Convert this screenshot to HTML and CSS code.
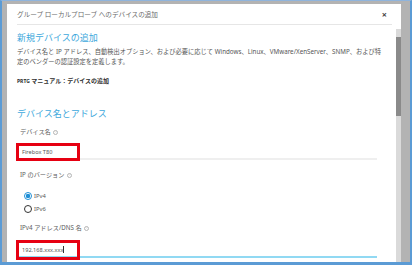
FILE: index.html
```html
<!DOCTYPE html>
<html lang="ja">
<head>
  <meta charset="UTF-8">
  <title>デバイスの追加</title>
  <link rel="stylesheet" href="styles.css">
</head>
<body>
  <div class="dialog">
    <div class="dialog-header">
      <span class="dialog-title">グループ ローカルプローブ へのデバイスの追加</span>
      <span class="close">×</span>
    </div>
    <div class="dialog-body">
      <div class="content">
        <h2>新規デバイスの追加</h2>
        <p class="desc">デバイス名と IP アドレス、自動検出オプション、および必要に応じて Windows、Linux、VMware/XenServer、SNMP、および特定のベンダーの認証設定を定義します。</p>
        <p class="manual"><span class="prtg">PRTG</span> マニュアル：デバイスの追加</p>

        <h2 class="section">デバイス名とアドレス</h2>

        <label class="field-label">デバイス名 <span class="info">i</span></label>
        <div class="field">
          <span class="field-text">Firebox T80</span>
          <span class="mark mark-name"></span>
        </div>

        <label class="field-label label-ip">IP のバージョン <span class="info">i</span></label>
        <div class="radios">
          <div class="radio-row"><span class="radio checked"></span>IPv4</div>
          <div class="radio-row"><span class="radio"></span>IPv6</div>
        </div>

        <label class="field-label label-addr">IPv4 アドレス/DNS 名 <span class="info">i</span></label>
        <div class="field field-active">
          <span class="field-text">192.168.xxx.xxx<span class="caret"></span></span>
          <span class="mark mark-addr"></span>
        </div>
      </div>
      <div class="scrollbar">
        <div class="scroll-thumb"></div>
      </div>
    </div>
  </div>
</body>
</html>
```

FILE: styles.css
```css
html, body {
  margin: 0;
  height: 100%;
}

body {
  box-sizing: border-box;
  height: 265px;
  overflow: hidden;
  background-color: #b3b3b3;
  border-top: 1px solid #8fb4dc;
  border-left: 2px solid #5b9bd5;
  border-right: 2px solid #5b9bd5;
  border-bottom: 3px solid #5b9bd5;
  padding: 3px 9px 0 5px;
  font-family: "Noto Sans", "Noto Sans CJK JP", sans-serif;
  color: #555;
}

.dialog {
  background-color: #fff;
  height: 100%;
  display: flex;
  flex-direction: column;
}

.dialog-header {
  margin: 0 9px 0 10px;
  padding-top: 2px;
  height: 18px;
  border-bottom: 1px solid #e6e6e6;
  display: flex;
  align-items: center;
  justify-content: space-between;
}

.dialog-title {
  font-size: 6.6px;
  color: #6b6b6b;
  line-height: 18px;
}

.close {
  font-size: 9px;
  font-weight: bold;
  color: #444;
  margin-right: 5px;
  line-height: 18px;
}

.dialog-body {
  flex: 1;
  display: flex;
}

.content {
  flex: 1;
  padding: 0 12px 0 10px;
}

.scrollbar {
  width: 5px;
  margin-top: 4px;
  padding-top: 8px;
  background-color: #dadada;
}

.scroll-thumb {
  height: 79px;
  background-color: #8a8a8a;
}

h2 {
  margin: 6px 0 0;
  font-size: 9px;
  line-height: 13px;
  font-weight: normal;
  color: #3da8dc;
}

.desc {
  margin: 3px 0 0;
  font-size: 6.25px;
  line-height: 10px;
  color: #555;
}

.manual {
  margin: 9px 0 0;
  font-size: 6px;
  line-height: 10px;
  font-weight: bold;
  color: #2e2e2e;
}

.prtg {
  font-size: 5px;
}

.section {
  margin-top: 21px;
}

.field-label {
  display: block;
  margin: 7px 0 0 3px;
  font-size: 6.2px;
  line-height: 10px;
  color: #5a5a5a;
}

.label-ip {
  margin-top: 10px;
}

.label-addr {
  margin-top: 8px;
}

.info {
  display: inline-block;
  box-sizing: border-box;
  width: 5px;
  height: 5px;
  margin-left: 1px;
  border: 1px solid #b5b5b5;
  border-radius: 50%;
  font-size: 3px;
  line-height: 3px;
  text-align: center;
  color: #b5b5b5;
  vertical-align: 1px;
}

.field {
  position: relative;
  margin-right: 7px;
  padding: 10px 0 1px 5px;
  border-bottom: 2px solid #efefef;
}

.field-active {
  padding-top: 12px;
  border-bottom-color: #91d9f3;
}

.field-text {
  display: block;
  font-size: 5.6px;
  line-height: 10px;
  color: #555;
}

.caret {
  display: inline-block;
  width: 1px;
  height: 7px;
  background-color: #333;
  vertical-align: -1px;
}

.mark {
  position: absolute;
  left: -1px;
  width: 64px;
  box-sizing: border-box;
  border: 3px solid #e60012;
}

.mark-name {
  top: 6px;
  height: 18px;
}

.mark-addr {
  top: 7px;
  height: 20px;
}

.radios {
  margin: 10px 0 0 7px;
  display: flex;
  flex-direction: column;
  gap: 1px;
}

.radio-row {
  display: flex;
  align-items: center;
  gap: 2px;
  height: 12px;
  font-size: 5.8px;
  color: #555;
}

.radio {
  box-sizing: border-box;
  width: 8px;
  height: 8px;
  border: 1px solid #333;
  border-radius: 50%;
  background-color: #fff;
}

.radio.checked {
  border-color: #1f8fd6;
  background: radial-gradient(circle, #1f8fd6 0 2px, #fff 2.4px);
}
```
